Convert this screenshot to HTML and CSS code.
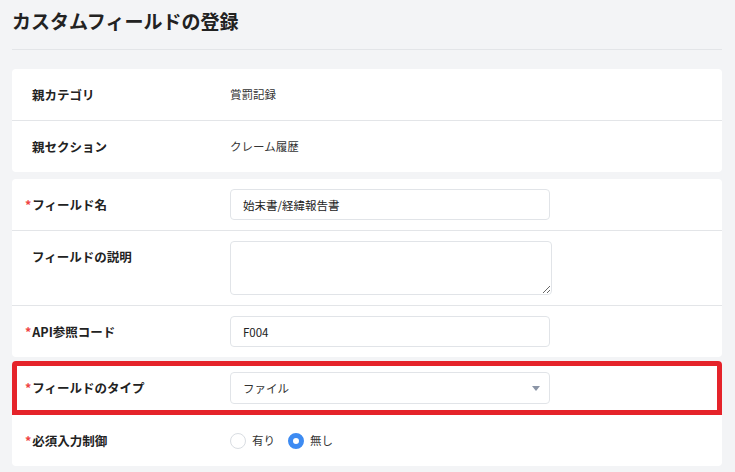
FILE: index.html
```html
<!DOCTYPE html>
<html lang="ja">
<head>
<meta charset="utf-8">
<link rel="stylesheet" href="styles.css">
</head>
<body>
<div class="page">
  <h1 class="title">カスタムフィールドの登録</h1>
  <hr class="rule">

  <section class="card">
    <div class="row">
      <div class="label">親カテゴリ</div>
      <div class="value">賞罰記録</div>
    </div>
    <div class="row">
      <div class="label">親セクション</div>
      <div class="value">クレーム履歴</div>
    </div>
  </section>

  <section class="card card-gap">
    <div class="row">
      <div class="label"><span class="req">*</span>フィールド名</div>
      <div class="value"><input class="input" type="text" value="始末書/経緯報告書"></div>
    </div>
    <div class="row">
      <div class="label">フィールドの説明</div>
      <div class="value"><textarea class="textarea"></textarea></div>
    </div>
    <div class="row">
      <div class="label"><span class="req">*</span>API参照コード</div>
      <div class="value"><input class="input" type="text" value="F004"></div>
    </div>
  </section>

  <section class="card card-gap-sm">
    <div class="row row-highlight">
      <div class="label"><span class="req">*</span>フィールドのタイプ</div>
      <div class="value">
        <div class="select">
          <span>ファイル</span>
          <span class="caret"></span>
        </div>
      </div>
    </div>
    <div class="row row-plain">
      <div class="label"><span class="req">*</span>必須入力制御</div>
      <div class="value radios">
        <label class="radio"><span class="dot"></span>有り</label>
        <label class="radio"><span class="dot dot-on"></span>無し</label>
      </div>
    </div>
  </section>
</div>
</body>
</html>
```

FILE: styles.css
```css
* { box-sizing: border-box; }

html, body {
  margin: 0;
  padding: 0;
  background: #f3f4f6;
}

body {
  font-family: "Noto Sans CJK JP", "Noto Sans", sans-serif;
  color: #222;
  width: 735px;
  height: 472px;
  overflow: hidden;
}

.page {
  padding: 0 13px 0 12px;
}

.title {
  margin: 0;
  padding-top: 7px;
  height: 49px;
  font-size: 19px;
  line-height: 28px;
  font-weight: 700;
  color: #222;
}

.rule {
  margin: 0;
  border: 0;
  border-top: 1px solid #e3e5e8;
  height: 0;
}

.card {
  background: #fff;
  border-radius: 4px;
  margin-top: 19px;
  overflow: hidden;
}

.card-gap { margin-top: 7px; }
.card-gap-sm { margin-top: 4px; }

.row {
  display: flex;
  align-items: flex-start;
  padding: 10px 20px;
  border-bottom: 1px solid #e3e5e8;
}

.row:last-child { border-bottom: 0; }

.label {
  width: 198px;
  flex: none;
  font-size: 12.5px;
  font-weight: 700;
  line-height: 31px;
  height: 31px;
  color: #222;
}

.req {
  color: #ef4444;
  font-weight: 700;
  margin-left: -7px;
  margin-right: 1px;
}

.value {
  font-size: 11.5px;
  line-height: 31px;
  color: #333;
}

.input {
  display: block;
  width: 320px;
  height: 31px;
  border: 1px solid #e1e4e8;
  border-radius: 4px;
  padding: 0 12px;
  font-family: inherit;
  font-size: 11.5px;
  color: #222;
  background: #fff;
  outline: none;
  margin: 0;
}

.textarea {
  display: block;
  width: 322px;
  height: 54px;
  border: 1px solid #e1e4e8;
  border-radius: 4px;
  padding: 6px 12px;
  font-family: inherit;
  font-size: 12px;
  resize: vertical;
  outline: none;
  margin: 0;
}

.row-highlight {
  border: 5px solid #e5232a;
  padding: 6px 15px;
}

.select {
  width: 320px;
  height: 32px;
  border: 1px solid #e1e4e8;
  border-radius: 4px;
  padding: 0 9px 0 12px;
  display: flex;
  align-items: center;
  justify-content: space-between;
  font-size: 11.5px;
  color: #333;
}

.caret {
  width: 0;
  height: 0;
  border-left: 4px solid transparent;
  border-right: 4px solid transparent;
  border-top: 5px solid #8b95a6;
}

.radios {
  display: flex;
  align-items: center;
  height: 31px;
  gap: 13px;
}

.radio {
  display: flex;
  align-items: center;
  gap: 6px;
  font-size: 11.5px;
  color: #333;
}

.dot {
  width: 16px;
  height: 16px;
  border-radius: 50%;
  border: 1px solid #d9dde2;
  background: #fff;
}

.dot-on {
  border: 5px solid #3d8bf2;
}
```
